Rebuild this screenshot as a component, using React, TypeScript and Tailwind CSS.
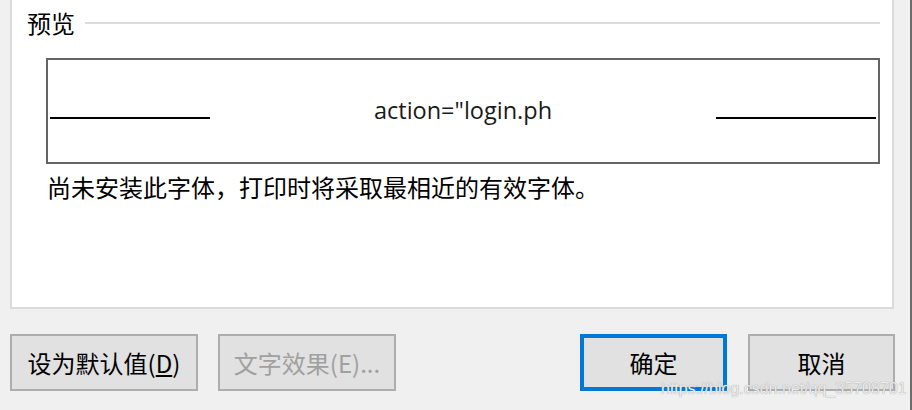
import React from "react";

const cjk = "font-['Noto_Sans_CJK_SC',sans-serif]";

function DialogButton({
  children,
  width,
  className = "",
  focused = false,
  disabled = false,
}: {
  children: React.ReactNode;
  width: string;
  className?: string;
  focused?: boolean;
  disabled?: boolean;
}) {
  return (
    <button
      className={`${width} h-[57px] flex items-center justify-center bg-[#e1e1e1] text-[24px] leading-none ${cjk} ${
        focused ? "border-4 border-[#0078d7]" : "border-2 border-[#adadad]"
      } ${disabled ? "text-[#a0a0a0]" : "text-black"} ${className}`}
    >
      {children}
    </button>
  );
}

export default function App() {
  return (
    <div className="relative w-[912px] h-[410px] bg-[#f0f0f0] border-r-2 border-[#6d6d6d] flex flex-col overflow-hidden">
      {/* font tab panel */}
      <div className="ml-[10px] w-[884px] h-[309px] bg-white border-x-2 border-b-2 border-[#dadada] flex flex-col">
        <div className="h-[46px] flex items-center pl-[15px] pr-[12px]">
          <span className={`text-[24px] leading-none text-black ${cjk}`}>预览</span>
          <div className="flex-1 h-[2px] bg-[#dcdcdc] ml-[10px]" />
        </div>

        <div className="ml-[34px] mt-[12px] w-[834px] h-[106px] border-2 border-[#646464]">
          <div className="mt-[35px] h-[31px] flex items-end px-[2px]">
            <div className="w-[160px] h-[2px] bg-black mb-[7px]" />
            <div className="flex-1 text-center text-[23.5px] leading-[31px] text-[#1a1a1a] font-['Open_Sans',sans-serif]">
              action="login.ph
            </div>
            <div className="w-[160px] h-[2px] bg-black mb-[7px]" />
          </div>
        </div>

        <p className={`ml-[35px] mt-[11px] text-[24px] leading-[24px] text-black ${cjk}`}>
          尚未安装此字体，打印时将采取最相近的有效字体。
        </p>
      </div>

      {/* buttons */}
      <div className="mt-[25px] flex pl-[10px]">
        <DialogButton width="w-[188px]">
          设为默认值(<span className="underline underline-offset-2">D</span>)
        </DialogButton>
        <DialogButton width="w-[178px]" className="ml-[20px]" disabled>
          文字效果(E)...
        </DialogButton>
        <DialogButton width="w-[147px]" className="ml-[184px]" focused>
          确定
        </DialogButton>
        <DialogButton width="w-[147px]" className="ml-[21px]">
          取消
        </DialogButton>
      </div>

      {/* watermark */}
      <span className="absolute left-[661px] top-[381px] text-[16px] leading-none text-[#ececec] font-['Liberation_Sans',Arial,sans-serif] [text-shadow:0_0_1px_#8a8a8a]">
        https://blog.csdn.net/qq_35708701
      </span>
    </div>
  );
}
